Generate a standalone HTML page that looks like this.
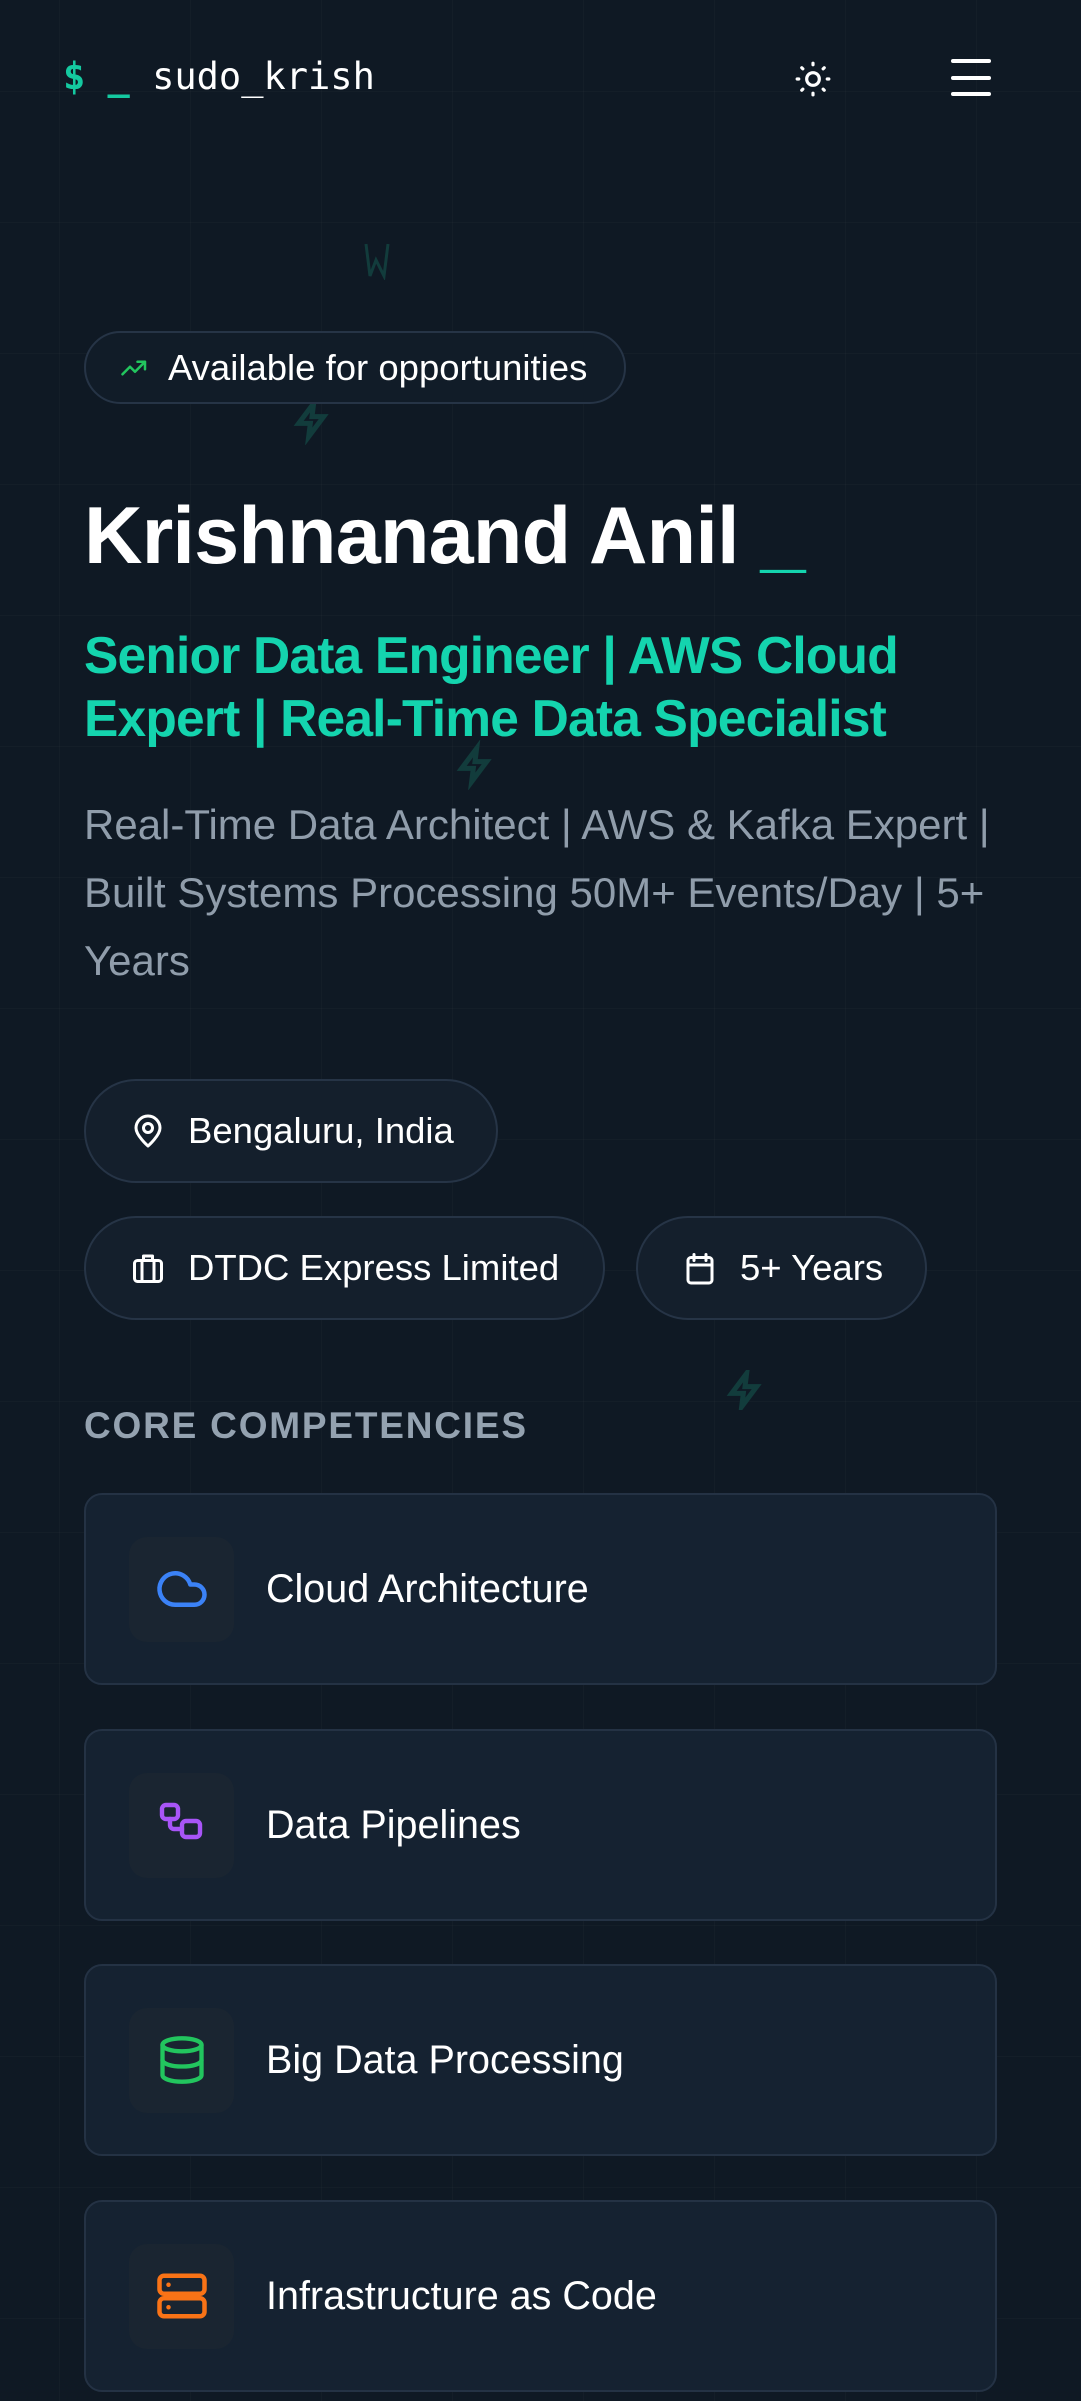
<!DOCTYPE html>
<html><head><meta charset="utf-8"><style>
*{margin:0;padding:0;box-sizing:border-box}
html,body{width:1081px;height:2401px;overflow:hidden}
body{background:#0f1924;font-family:"Liberation Sans",sans-serif;position:relative;
background-image:linear-gradient(rgba(255,255,255,0.018) 1px,transparent 1px),linear-gradient(90deg,rgba(255,255,255,0.018) 1px,transparent 1px);
background-size:131px 131px;background-position:59px 222px}
.abs{position:absolute}
.logo{left:63px;top:55px;font-family:"DejaVu Sans Mono",monospace;font-size:37px;color:#fff;line-height:44px;white-space:pre}
.logo .t{color:#14c9a0;font-weight:bold}
.badge{left:84px;top:331px;width:542px;height:73px;border:2px solid #263446;border-radius:37px;background:#111c28;color:#fff;font-size:36.5px;display:flex;align-items:center;padding-left:34px}
.badge svg{margin-right:18px}
.name{left:84px;top:491px;font-size:81px;font-weight:bold;color:#fff;letter-spacing:-0.8px;line-height:90px;white-space:nowrap}
.name span{color:#14d4ae}
.sub{left:84px;top:624px;width:930px;font-size:51.5px;font-weight:bold;color:#14d4ae;line-height:63px;letter-spacing:-0.8px}
.desc{left:84px;top:791px;width:925px;font-size:42px;color:#909dab;line-height:68px}
.pill{height:104px;border:2px solid #263446;border-radius:52px;background:#141f2c;color:#fff;font-size:36.5px;display:flex;align-items:center;padding-left:44px}
.pill svg{margin-right:22px}
.h{left:84px;top:1405px;font-size:37px;font-weight:bold;color:#94a2b0;letter-spacing:1.8px}
.card{left:84px;width:913px;height:192px;background:#152231;border:2px solid #243244;border-radius:18px;display:flex;align-items:center;padding-left:43px}
.ib{width:105px;height:105px;border-radius:18px;background:#1a2531;display:flex;align-items:center;justify-content:center;margin-right:32px}
.card .tx{color:#fff;font-size:39.5px}
.deco{stroke:#123c3c;fill:none;stroke-width:3}
</style></head><body>
<div class="abs logo"><span class="t">$ _</span> sudo_krish</div>
<svg class="abs" style="left:794px;top:60px" width="38" height="38" viewBox="0 0 24 24" fill="none" stroke="#fff" stroke-width="2" stroke-linecap="round"><circle cx="12" cy="12" r="4"/><path d="M12 2v1M12 21v1M4.9 4.9l.7.7M18.4 18.4l.7.7M2 12h1M21 12h1M4.9 19.1l.7-.7M18.4 5.6l.7-.7"/></svg>
<div class="abs" style="left:951px;top:59px;width:40px;height:4px;background:#fff;border-radius:2px"></div>
<div class="abs" style="left:951px;top:76px;width:40px;height:4px;background:#fff;border-radius:2px"></div>
<div class="abs" style="left:951px;top:92px;width:40px;height:4px;background:#fff;border-radius:2px"></div>

<svg class="abs deco" style="left:360px;top:240px" width="34" height="40" viewBox="0 0 34 40"><path d="M6 4l4 32 6-16 8 16 4-32"/></svg>
<svg class="abs deco" style="left:292px;top:395px" width="40" height="50" viewBox="0 0 24 24"><path d="M13 2L4 14h7l-1 8 9-12h-7z"/></svg>
<svg class="abs deco" style="left:455px;top:740px" width="40" height="50" viewBox="0 0 24 24"><path d="M13 2L4 14h7l-1 8 9-12h-7z"/></svg>
<svg class="abs deco" style="left:725px;top:1370px" width="40" height="40" viewBox="0 0 24 24"><path d="M13 2L4 14h7l-1 8 9-12h-7z"/></svg>

<div class="abs badge"><svg width="30" height="30" viewBox="0 0 24 24" fill="none" stroke="#22c55e" stroke-width="2" stroke-linecap="round" stroke-linejoin="round"><path d="M2 17l6-6 4 4 8-8M14 7h6v6"/></svg>Available for opportunities</div>
<div class="abs name">Krishnanand Anil <span>_</span></div>
<div class="abs sub">Senior Data Engineer | AWS Cloud Expert | Real-Time Data Specialist</div>
<div class="abs desc">Real-Time Data Architect | AWS &amp; Kafka Expert | Built Systems Processing 50M+ Events/Day | 5+ Years</div>

<div class="abs pill" style="left:84px;top:1079px;width:414px"><svg width="36" height="36" viewBox="0 0 24 24" fill="none" stroke="#fff" stroke-width="2" stroke-linecap="round" stroke-linejoin="round"><path d="M20 10c0 5-8 12-8 12s-8-7-8-12a8 8 0 0 1 16 0z"/><circle cx="12" cy="10" r="3"/></svg>Bengaluru, India</div>
<div class="abs pill" style="left:84px;top:1216px;width:521px"><svg width="36" height="36" viewBox="0 0 24 24" fill="none" stroke="#fff" stroke-width="2" stroke-linecap="round" stroke-linejoin="round"><rect x="3" y="7" width="18" height="14" rx="2"/><path d="M8 21V7M16 21V7M9 7V4h6v3"/></svg>DTDC Express Limited</div>
<div class="abs pill" style="left:636px;top:1216px;width:291px"><svg width="36" height="36" viewBox="0 0 24 24" fill="none" stroke="#fff" stroke-width="2" stroke-linecap="round" stroke-linejoin="round"><rect x="4" y="5" width="16" height="17" rx="2"/><path d="M8 3v4M16 3v4M4 10h16"/></svg>5+ Years</div>

<div class="abs h">CORE COMPETENCIES</div>

<div class="abs card" style="top:1493px"><div class="ib"><svg width="54" height="54" viewBox="0 0 24 24" fill="none" stroke="#3b82f6" stroke-width="2" stroke-linecap="round" stroke-linejoin="round"><path d="M17.5 19H9a7 7 0 1 1 6.7-9h1.8a4.5 4.5 0 1 1 0 9z"/></svg></div><div class="tx">Cloud Architecture</div></div>
<div class="abs card" style="top:1729px"><div class="ib"><svg width="48" height="48" viewBox="0 0 24 24" fill="none" stroke="#a855f7" stroke-width="2.2" stroke-linecap="round" stroke-linejoin="round"><rect x="2" y="2" width="8" height="7" rx="2"/><rect x="12" y="10" width="9" height="8" rx="2"/><path d="M6 9v3a2 2 0 0 0 2 2h4"/></svg></div><div class="tx">Data Pipelines</div></div>
<div class="abs card" style="top:1964px"><div class="ib"><svg width="52" height="52" viewBox="0 0 24 24" fill="none" stroke="#22c55e" stroke-width="2" stroke-linecap="round" stroke-linejoin="round"><ellipse cx="12" cy="5" rx="9" ry="3"/><path d="M3 5v14c0 1.7 4 3 9 3s9-1.3 9-3V5"/><path d="M3 12c0 1.7 4 3 9 3s9-1.3 9-3"/></svg></div><div class="tx">Big Data Processing</div></div>
<div class="abs card" style="top:2200px"><div class="ib"><svg width="54" height="54" viewBox="0 0 24 24" fill="none" stroke="#f97316" stroke-width="2" stroke-linecap="round" stroke-linejoin="round"><rect x="2" y="3" width="20" height="8" rx="2"/><rect x="2" y="13" width="20" height="8" rx="2"/><path d="M6 7h.01M6 17h.01"/></svg></div><div class="tx">Infrastructure as Code</div></div>
</body></html>
